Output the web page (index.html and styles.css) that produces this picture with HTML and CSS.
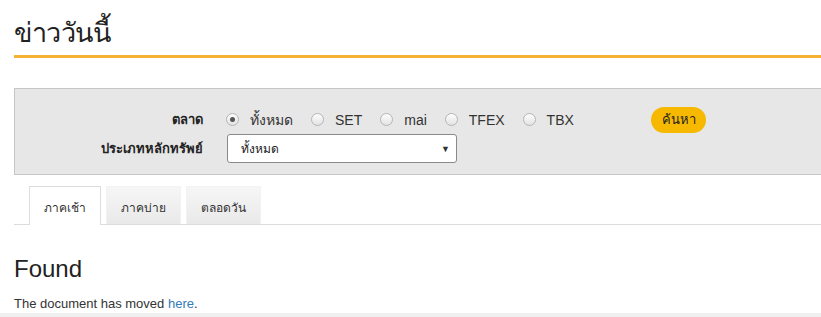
FILE: index.html
```html
<!DOCTYPE html>
<html lang="th">
<head>
<meta charset="UTF-8">
<title>ข่าววันนี้</title>
<link rel="stylesheet" href="styles.css">
</head>
<body>
<div class="page">
  <h1 class="title">ข่าววันนี้</h1>

  <div class="search-box">
    <div class="search-row">
      <label class="field-label">ตลาด</label>
      <div class="radios">
        <label class="radio"><span class="dot checked"></span>ทั้งหมด</label>
        <label class="radio"><span class="dot"></span>SET</label>
        <label class="radio"><span class="dot"></span>mai</label>
        <label class="radio"><span class="dot"></span>TFEX</label>
        <label class="radio"><span class="dot"></span>TBX</label>
      </div>
      <button class="btn-search">ค้นหา</button>
    </div>
    <div class="search-row">
      <label class="field-label">ประเภทหลักทรัพย์</label>
      <div class="select">
        <span>ทั้งหมด</span>
        <span class="arrow">&#9660;</span>
      </div>
    </div>
  </div>

  <ul class="tabs">
    <li class="tab active">ภาคเช้า</li>
    <li class="tab">ภาคบ่าย</li>
    <li class="tab">ตลอดวัน</li>
  </ul>

  <div class="result">
    <h2>Found</h2>
    <p>The document has moved <a href="#">here</a>.</p>
  </div>
</div>
<div class="bottom-strip"></div>
</body>
</html>
```

FILE: styles.css
```css
html, body {
  margin: 0;
  padding: 0;
  overflow: hidden;
}
body {
  font-family: "Liberation Sans", Arial, sans-serif;
  color: #333;
  background-color: #fff;
}
.page {
  width: 820px;
  padding-left: 14px;
}
.title {
  margin: 0;
  padding-top: 16px;
  height: 39px;
  font-size: 27px;
  font-weight: normal;
  line-height: 34px;
  letter-spacing: -0.5px;
  color: #222;
  border-bottom: 3px solid #f7b234;
}
.search-box {
  margin-top: 30px;
  height: 87px;
  background-color: #e7e7e7;
  border: 1px solid #c6c6c6;
  box-sizing: border-box;
  font-size: 14px;
}
.search-row {
  display: flex;
  align-items: center;
}
.search-row:first-child {
  height: 45px;
  padding-top: 16px;
  box-sizing: border-box;
}
.field-label {
  width: 188px;
  text-align: right;
  font-weight: bold;
  color: #222;
  font-size: 13px;
}
.radios {
  display: flex;
  margin-left: 23px;
  width: 425px;
  gap: 18px;
}
.radio {
  display: flex;
  align-items: center;
  color: #333;
}
.dot {
  width: 11px;
  height: 11px;
  border: 1px solid #b5b5b5;
  border-radius: 50%;
  background: linear-gradient(#fdfdfd, #e3e3e3);
  margin-right: 11px;
  position: relative;
}
.dot.checked::after {
  content: "";
  position: absolute;
  left: 3px;
  top: 3px;
  width: 5px;
  height: 5px;
  border-radius: 50%;
  background-color: #555;
}
.btn-search {
  width: 55px;
  height: 26px;
  border: none;
  border-radius: 13px;
  background-color: #f7b900;
  color: #222;
  font-family: inherit;
  font-size: 13px;
  padding: 0;
}
.select {
  margin-left: 24px;
  width: 230px;
  height: 29px;
  box-sizing: border-box;
  border: 1px solid #8a8a8a;
  border-radius: 3px;
  background-color: #fff;
  display: flex;
  align-items: center;
  justify-content: space-between;
  padding: 0 6px 0 13px;
  font-size: 12px;
  color: #222;
}
.select .arrow {
  font-size: 9px;
  color: #333;
}
.tabs {
  list-style: none;
  margin: 11px 0 0;
  padding: 0 0 0 15px;
  display: flex;
  gap: 5px;
  border-bottom: 1px solid #ddd;
  height: 38px;
}
.tab {
  padding: 0 14px;
  height: 38px;
  line-height: 42px;
  font-size: 12px;
  color: #333;
  background: linear-gradient(#f6f6f6, #e9e9e9);
  border: 1px solid #f2f2f2;
  border-bottom: none;
  box-sizing: border-box;
}
.tab.active {
  background: #fff;
  border-color: #ddd;
  height: 39px;
}
.result h2 {
  margin: 31px 0 0;
  font-size: 24px;
  font-weight: normal;
  line-height: 26px;
  color: #222;
}
.result p {
  margin: 14px 0 0;
  font-size: 13px;
  line-height: 16px;
  color: #333;
}
.result a {
  color: #337ab7;
  text-decoration: none;
}
.bottom-strip {
  position: absolute;
  left: 0;
  top: 313px;
  width: 100%;
  height: 10px;
  background-color: #f0f0f0;
}
```
